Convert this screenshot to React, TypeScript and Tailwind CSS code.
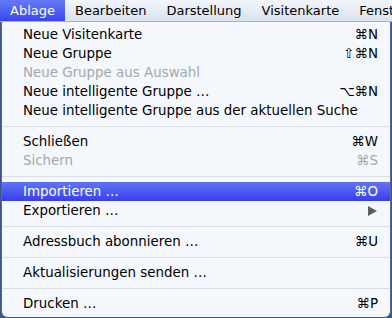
type Item =
  | { kind: "item"; label: string; shortcut?: string; disabled?: boolean; active?: boolean; submenu?: boolean }
  | { kind: "sep" };

const items: Item[] = [
  { kind: "item", label: "Neue Visitenkarte", shortcut: "⌘N" },
  { kind: "item", label: "Neue Gruppe", shortcut: "⇧⌘N" },
  { kind: "item", label: "Neue Gruppe aus Auswahl", disabled: true },
  { kind: "item", label: "Neue intelligente Gruppe …", shortcut: "⌥⌘N" },
  { kind: "item", label: "Neue intelligente Gruppe aus der aktuellen Suche" },
  { kind: "sep" },
  { kind: "item", label: "Schließen", shortcut: "⌘W" },
  { kind: "item", label: "Sichern", shortcut: "⌘S", disabled: true },
  { kind: "sep" },
  { kind: "item", label: "Importieren …", shortcut: "⌘O", active: true },
  { kind: "item", label: "Exportieren …", submenu: true },
  { kind: "sep" },
  { kind: "item", label: "Adressbuch abonnieren …", shortcut: "⌘U" },
  { kind: "sep" },
  { kind: "item", label: "Aktualisierungen senden …" },
  { kind: "sep" },
  { kind: "item", label: "Drucken …", shortcut: "⌘P" },
];

const menus = ["Bearbeiten", "Darstellung", "Visitenkarte", "Fenster"];

export default function App() {
  return (
    <div className="w-[392px] h-[318px] overflow-hidden bg-[#3d5684] font-['DejaVu_Sans',sans-serif] text-[13.4px] leading-none">
      {/* menu bar */}
      <div className="flex h-[22px] text-[13px] bg-gradient-to-b from-[#f3f6fb] to-[#d9e2ee] border-b border-[#a9b3c1] whitespace-nowrap overflow-hidden">
        <div className="flex items-center px-[10px] h-full bg-gradient-to-b from-[#6579f5] to-[#3d43ef] text-white">
          Ablage
        </div>
        {menus.map((m) => (
          <div key={m} className="flex items-center px-[10px] text-black">
            {m}
          </div>
        ))}
      </div>

      {/* dropdown */}
      <div className="mx-[1px] h-[295px] bg-[#f4f7fb] rounded-b-[6px] border-x border-[#56688f] pt-[3px] pb-[4px]">
        {items.map((it, i) =>
          it.kind === "sep" ? (
            <div key={i} className="h-[12px] flex items-center">
              <div className="h-px w-full bg-[#dadfe6]" />
            </div>
          ) : (
            <div
              key={i}
              className={
                "h-[19px] flex items-center justify-between pl-[21px] pr-[12px] " +
                (it.active
                  ? "bg-gradient-to-b from-[#6174f6] to-[#3a3bef] text-white"
                  : it.disabled
                  ? "text-[#a3a7ad]"
                  : "text-black")
              }
            >
              <span>{it.label}</span>
              {it.shortcut && <span>{it.shortcut}</span>}
              {it.submenu && (
                <svg width="9" height="10" viewBox="0 0 9 10" className="mr-[1px]">
                  <path d="M0 0 L9 5 L0 10 Z" fill="#5d5f63" />
                </svg>
              )}
            </div>
          )
        )}
      </div>
    </div>
  );
}
